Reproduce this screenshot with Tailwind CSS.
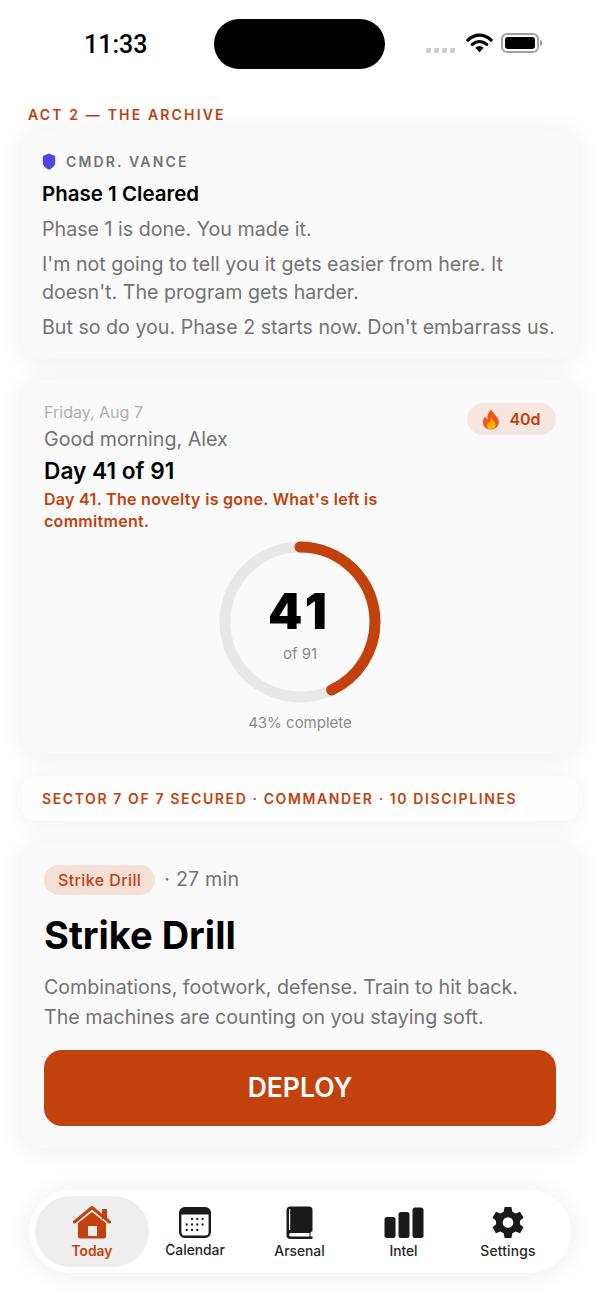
<!DOCTYPE html>
<html lang="en">
<head>
  <meta charset="UTF-8" />
  <meta name="viewport" content="width=device-width, initial-scale=1.0"/>
  <title>Today</title>
  <script src="https://cdn.jsdelivr.net/npm/@tailwindcss/browser@4"></script>
</head>
<body class="w-[600px] h-[1303px] overflow-hidden bg-white font-[Inter,sans-serif]">
  <div class="relative h-[1303px] flex flex-col">

    <!-- status bar -->
    <div class="h-[104px] shrink-0 flex items-start">
      <div class="w-[214px] pt-[30px] pl-[84px] text-[25px] leading-[30px] font-medium text-black font-['Roboto',sans-serif]">11:33</div>
      <div class="mt-[19px] w-[171px] h-[50px] rounded-[25px] bg-black"></div>
      <div class="flex items-start pt-[33px] pl-[41px]">
        <div class="flex gap-[3px] mt-[15px]">
          <span class="w-[5px] h-[5px] rounded-[1px] bg-[#d0d0d0]"></span>
          <span class="w-[5px] h-[5px] rounded-[1px] bg-[#d0d0d0]"></span>
          <span class="w-[5px] h-[5px] rounded-[1px] bg-[#d0d0d0]"></span>
          <span class="w-[5px] h-[5px] rounded-[1px] bg-[#d0d0d0]"></span>
        </div>
        <svg class="ml-[11px] w-[27px] h-[20px]" viewBox="0 0 28 20"><path d="M2 7 C9 0 19 0 26 7" fill="none" stroke="#000" stroke-width="3.4" stroke-linecap="round"/><path d="M6.5 11.5 C11 7.5 17 7.5 21.5 11.5" fill="none" stroke="#000" stroke-width="3.2" stroke-linecap="round"/><path d="M9.6 15 Q14 11 18.4 15 L14 19.6 Z" fill="#000"/></svg>
        <div class="ml-[8px] flex items-center">
          <div class="w-[38px] h-[20px] rounded-[6px] border-2 border-[#a0a0a0] p-[2px]"><div class="h-full rounded-[3px] bg-black"></div></div>
          <span class="ml-[1px] w-[2px] h-[6px] rounded-r-sm bg-[#999]"></span>
        </div>
      </div>
    </div>

    <div class="px-[28px] h-[26px] text-[14px] leading-[22px] font-semibold tracking-[2.15px] text-[#c2410c]">ACT 2 — THE ARCHIVE</div>

    <div class="px-[22px] flex flex-col gap-[22px]">
      <!-- commander message -->
      <section class="h-[228px] rounded-[18px] bg-[#fafafa] shadow-[0_2px_28px_rgba(0,0,0,0.07)] px-[20px] pt-[21px]">
        <div class="flex items-center gap-[10px] h-[20px]">
          <svg class="w-[14px] h-[17px]" viewBox="0 0 14 17"><path d="M7 0.5 L13.2 3 V9.5 C13.2 13 10 15.5 7 16.7 C4 15.5 0.8 13 0.8 9.5 V3 Z" fill="#4f46e5"/></svg>
          <span class="text-[14px] font-semibold tracking-[2.15px] text-[#737373]">CMDR. VANCE</span>
        </div>
        <h2 class="mt-[10px] text-[20.5px] leading-[26px] font-semibold text-black">Phase 1 Cleared</h2>
        <p class="mt-[8px] text-[19.65px] leading-[28px] text-[#737373]">Phase 1 is done. You made it.</p>
        <p class="mt-[7px] text-[19.65px] leading-[28px] text-[#737373]">I'm not going to tell you it gets easier from here. It doesn't. The program gets harder.</p>
        <p class="mt-[7px] text-[19.65px] leading-[28px] text-[#737373] whitespace-nowrap">But so do you. Phase 2 starts now. Don't embarrass us.</p>
      </section>

      <!-- day card -->
      <section class="relative h-[374px] rounded-[18px] bg-[#fafafa] shadow-[0_2px_28px_rgba(0,0,0,0.07)] px-[22px] pt-[22px]">
        <div class="absolute right-[22px] top-[23px] h-[32px] w-[89px] rounded-full bg-[#f5e6df] flex items-center justify-center gap-[9px]">
          <svg class="w-[18px] h-[21px]" viewBox="0 0 18 21"><path d="M9.5 0.5 C10.5 4 15 6.5 16.5 11 C18 16 14 20.5 9 20.5 C4 20.5 0.5 17 1 12.5 C1.3 10 2.5 8.5 3.5 7.5 C3.8 9 4.5 10 5.5 10.2 C5 6 7 2.5 9.5 0.5 Z" fill="#f4511e"/><path d="M9.5 8.5 C10 11 14 13 13.5 16.5 C13 19 11 20.5 9 20.5 C6.5 20.5 4.5 18.5 5 16 C5.3 14.5 6.3 13.5 7 13 C7.3 13.8 7.8 14.2 8.3 14.2 C8 12 8.5 10 9.5 8.5 Z" fill="#ffb300"/></svg>
          <span class="text-[16px] font-semibold text-[#c2410c]">40d</span>
        </div>
        <div class="text-[16px] leading-[20px] text-[#b0b0b0]">Friday, Aug 7</div>
        <div class="mt-[5px] text-[19.65px] leading-[24px] text-[#737373]">Good morning, Alex</div>
        <h2 class="mt-[6px] text-[22.7px] leading-[28px] font-semibold text-black">Day 41 of 91</h2>
        <p class="mt-[3px] w-[400px] text-[16px] leading-[22px] font-semibold tracking-[0.3px] text-[#c2410c]">Day 41. The novelty is gone. What's left is commitment.</p>
        <div class="relative mx-auto mt-[9px] w-[162px] h-[162px]">
          <svg class="w-full h-full -rotate-90" viewBox="0 0 162 162">
            <circle cx="81" cy="81" r="75" fill="none" stroke="#e8e8e8" stroke-width="11"/>
            <circle cx="81" cy="81" r="75" fill="none" stroke="#c2410c" stroke-width="11" stroke-linecap="round" stroke-dasharray="202.6 471.2"/>
          </svg>
          <div class="absolute inset-0 flex flex-col items-center">
            <span class="mt-[42px] text-[49px] leading-[58px] font-black tracking-[5px] text-black">41</span>
            <span class="mt-[3px] text-[15px] leading-[20px] text-[#8a8a8a]">of 91</span>
          </div>
        </div>
        <div class="mt-[10px] text-center text-[15px] leading-[20px] text-[#8a8a8a]">43% complete</div>
      </section>

      <!-- sector strip -->
      <section class="h-[45px] rounded-[14px] bg-[#fefefe] shadow-[0_2px_26px_rgba(0,0,0,0.06)] px-[20px] flex items-center">
        <span class="text-[14px] font-semibold tracking-[1.6px] text-[#c2410c] whitespace-nowrap">SECTOR 7 OF 7 SECURED · COMMANDER · 10 DISCIPLINES</span>
      </section>

      <!-- mission card -->
      <section class="h-[305px] rounded-[18px] bg-[#fafafa] shadow-[0_2px_28px_rgba(0,0,0,0.07)] px-[22px] pt-[22px]">
        <div class="flex items-center gap-[9px] h-[30px]">
          <span class="h-[30px] px-[14px] rounded-full bg-[#f5e0d8] text-[16px] leading-[30px] font-medium tracking-[0.4px] text-[#c2410c]">Strike Drill</span>
          <span class="text-[19.65px] tracking-[0.2px] text-[#737373]">· 27 min</span>
        </div>
        <h1 class="mt-[17px] text-[38px] leading-[46px] font-bold text-black">Strike Drill</h1>
        <p class="mt-[14px] text-[19.65px] leading-[30px] text-[#737373] whitespace-nowrap">Combinations, footwork, defense. Train to hit back.<br>The machines are counting on you staying soft.</p>
        <button class="mt-[18px] w-full h-[76px] rounded-[18px] bg-[#c2410c] text-white text-[26.5px] font-semibold">DEPLOY</button>
      </section>
    </div>

    <!-- tab bar -->
    <nav class="absolute left-[29px] top-[1190px] w-[542px] h-[83px] rounded-[42px] bg-white shadow-[0_2px_28px_rgba(0,0,0,0.07)] p-[6px] flex">
      <div class="w-[114px] rounded-[36px] bg-[#eeeeee] flex flex-col items-center pt-[10px]">
        <svg class="w-[38px] h-[33px]" viewBox="0 0 38 33"><path d="M1.5 16 L19 1.5 L36.5 16" fill="none" stroke="#c2410c" stroke-width="3" stroke-linecap="round" stroke-linejoin="round"/><rect x="29" y="3" width="5" height="10" fill="#c2410c"/><path d="M5 17 L19 6 L33 17 V30.5 Q33 32.5 31 32.5 H7 Q5 32.5 5 30.5 Z M15 20 V30 H24 V20 Z" fill="#c2410c" fill-rule="evenodd"/></svg>
        <span class="mt-[4px] text-[13.8px] leading-[16px] font-semibold text-[#c2410c]">Today</span>
      </div>
      <div class="flex-1 flex">
        <div class="w-[92px] flex flex-col items-center pt-[11px]">
          <svg class="w-[32px] h-[31px]" viewBox="0 0 32 31"><rect x="1.2" y="1.2" width="29.6" height="28.6" rx="4.5" fill="#fff" stroke="#1a1a1a" stroke-width="2.4"/><path d="M1 6 Q1 1 6 1 H26 Q31 1 31 6 V7.5 H1 Z" fill="#1a1a1a"/><g fill="#1a1a1a"><circle cx="13" cy="12" r="1.15"/><circle cx="18.3" cy="12" r="1.15"/><circle cx="23.6" cy="12" r="1.15"/><circle cx="7.7" cy="17.5" r="1.15"/><circle cx="13" cy="17.5" r="1.15"/><circle cx="18.3" cy="17.5" r="1.15"/><circle cx="23.6" cy="17.5" r="1.15"/><circle cx="7.7" cy="23" r="1.15"/><circle cx="13" cy="23" r="1.15"/><circle cx="18.3" cy="23" r="1.15"/></g></svg>
          <span class="mt-[4px] text-[13.8px] leading-[16px] font-medium text-[#262626]">Calendar</span>
        </div>
        <div class="w-[117px] flex flex-col items-center pt-[10px]">
          <svg class="w-[27px] h-[33px]" viewBox="0 0 27 33"><path d="M4.5 0.5 H23 Q26.5 0.5 26.5 4 V25 L24.5 26.5 V30.5 H26.5 V33 H4.5 Q0.5 33 0.5 29 V4.5 Q0.5 0.5 4.5 0.5 Z" fill="#1a1a1a"/><path d="M5 27 H23.5 V30.5 H5 Q3 30.5 3 28.7 Q3 27 5 27 Z" fill="#fff"/><rect x="3" y="3" width="1.2" height="21" fill="#fff"/></svg>
          <span class="mt-[4px] text-[13.8px] leading-[16px] font-medium text-[#262626]">Arsenal</span>
        </div>
        <div class="w-[91px] flex flex-col items-center pt-[11px]">
          <svg class="w-[40px] h-[32px]" viewBox="0 0 40 32"><rect x="0.5" y="10" width="11" height="21" rx="2.5" fill="#1a1a1a"/><rect x="14.5" y="5" width="11" height="26" rx="2.5" fill="#1a1a1a"/><rect x="28.5" y="0.5" width="11" height="30.5" rx="2.5" fill="#1a1a1a"/></svg>
          <span class="mt-[4px] text-[13.8px] leading-[16px] font-medium text-[#262626]">Intel</span>
        </div>
        <div class="w-[116px] flex flex-col items-center pt-[10px] pl-[2px]">
          <svg class="w-[34px] h-[33px]" viewBox="0 0 34 34"><path fill="#1a1a1a" fill-rule="evenodd" d="M13.5 1 H20.5 L21.5 5.8 L24.8 7.6 L29.4 6 L33 12 L29.3 15.2 V18.8 L33 22 L29.4 28 L24.8 26.4 L21.5 28.2 L20.5 33 H13.5 L12.5 28.2 L9.2 26.4 L4.6 28 L1 22 L4.7 18.8 V15.2 L1 12 L4.6 6 L9.2 7.6 L12.5 5.8 Z M17 11.5 A5.5 5.5 0 1 0 17 22.5 A5.5 5.5 0 1 0 17 11.5 Z"/></svg>
          <span class="mt-[4px] text-[13.8px] leading-[16px] font-medium tracking-[0.2px] text-[#262626]">Settings</span>
        </div>
      </div>
    </nav>
  </div>
</body>
</html>
